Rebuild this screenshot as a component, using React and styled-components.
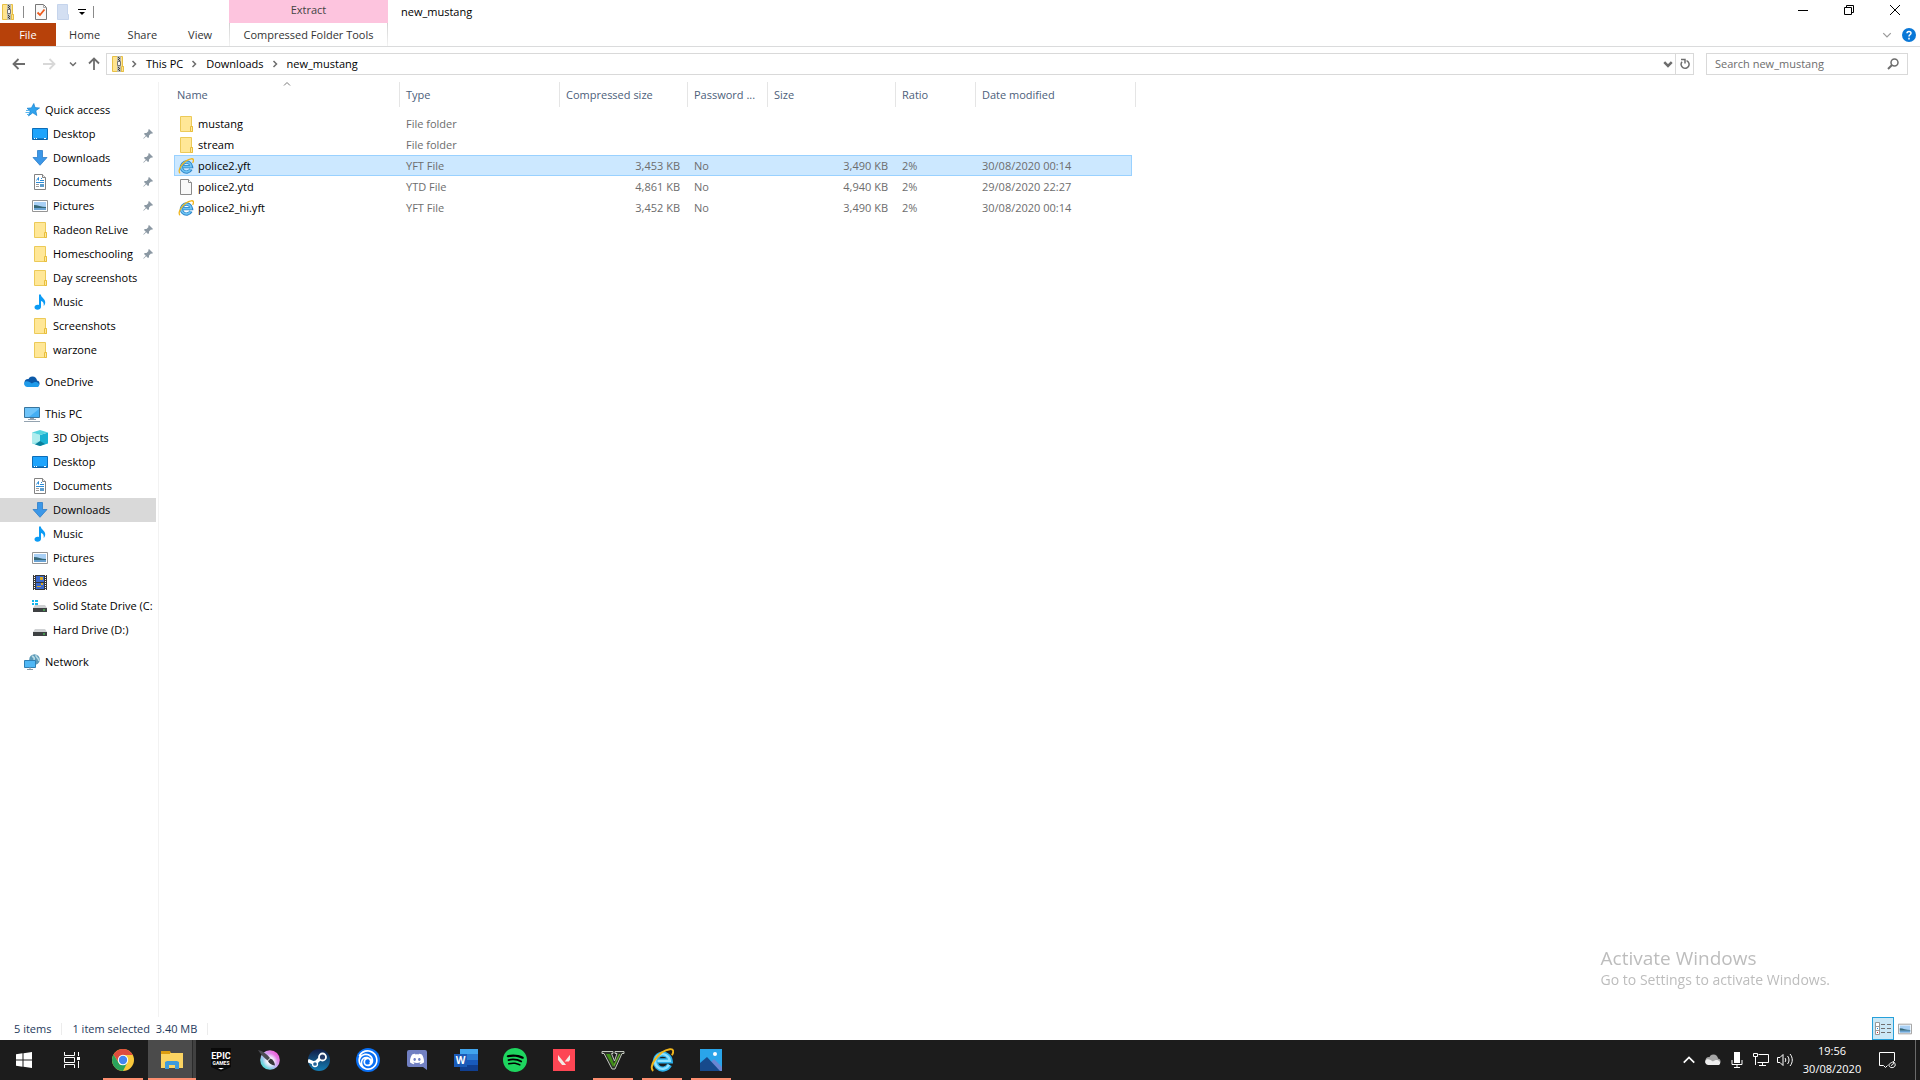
import React, { useState } from 'react';
import styled, { createGlobalStyle, css } from 'styled-components';
import { SiDiscord, SiSpotify, SiUbisoft, SiValorant } from 'react-icons/si';

const GlobalStyle = createGlobalStyle`
    * {
        box-sizing: border-box;
    }

    body {
        margin: 0;
        background-color: #ffffff;
        color: #000000;
        font-family: 'Open Sans', 'Noto Sans', sans-serif;
        font-size: 11px;
        line-height: 16px;
    }

    button, input {
        margin: 0;
        padding: 0;
        border: none;
        background: none;
        color: inherit;
        font: inherit;
    }

    svg {
        display: block;
        flex-shrink: 0;
    }
`

const Window = styled.div`
    display: flex;
    flex-direction: column;
    min-height: 100vh;
`

// Title bar and ribbon
const Ribbon = styled.header`
    display: flex;
    justify-content: space-between;
    height: 47px;
    border-bottom: 1px solid #dadbdc;
`

const RibbonStart = styled.div`
    display: flex;
`

const RibbonMain = styled.div`
    display: flex;
    flex-direction: column;
    width: 229px;
`

const QuickBar = styled.div`
    display: flex;
    align-items: center;
    height: 23px;
    padding-left: 1px;
`

const QuickButton = styled.button`
    display: flex;
    align-items: center;
    justify-content: center;
    width: ${props => props.$narrow ? '16px' : '22px'};
    height: 23px;
`

const QuickDivider = styled.span`
    width: 1px;
    height: 12px;
    margin: 0 6px 0 ${props => props.$start ? '8px' : '3px'};
    background-color: #8a8a8a;
`

const Tabs = styled.div`
    display: flex;
    height: 23px;
`

const Tab = styled.button`
    width: 58px;
    height: 23px;
    color: #333333;
    text-align: center;
`

const FileTab = styled(Tab)`
    width: 56px;
    background-color: #b7410a;
    color: #ffffff;
`

const ContextGroup = styled.div`
    display: flex;
    flex-direction: column;
    width: 159px;
`

const ContextTitle = styled.div`
    height: 23px;
    padding-top: 2px;
    background-color: #fdc4de;
    color: #444444;
    text-align: center;
`

const ContextTab = styled(Tab)`
    width: 100%;
    border: 1px solid;
    border-width: 0 1px;
    border-image: linear-gradient(#d0d0d0, #f4f4f4) 1;
`

const WindowTitle = styled.h1`
    margin: 0;
    padding: 4px 0 0 13px;
    font-size: 11px;
    font-weight: 400;
`

const RibbonEnd = styled.div`
    display: flex;
    flex-direction: column;
    align-items: flex-end;
`

const WindowButtons = styled.div`
    display: flex;
    height: 23px;
    padding-right: 2px;
`

const WindowButton = styled.button`
    display: flex;
    align-items: center;
    justify-content: center;
    width: 46px;
    height: 20px;
`

const RibbonTools = styled.div`
    display: flex;
    align-items: center;
    gap: 10px;
    height: 23px;
    padding-right: 4px;
`

// Address row
const AddressRow = styled.div`
    display: flex;
    align-items: center;
    height: 35px;
    padding: 0 12px 1px 4px;
`

const navWidths = { wide: '30px', medium: '24px', narrow: '18px' };

const NavButton = styled.button`
    display: flex;
    align-items: center;
    justify-content: center;
    width: ${props => navWidths[props.$size || 'wide']};
    height: 22px;
    color: ${props => props.$faded ? '#d8d8d8' : '#6d6d6d'};
`

const AddressBox = styled.div`
    display: flex;
    flex: 1;
    align-items: center;
    height: 22px;
    padding-left: 4px;
    border: 1px solid #d9d9d9;
`

const Crumbs = styled.nav`
    display: flex;
    flex: 1;
    align-items: center;
    padding-left: 5px;
`

const Crumb = styled.a`
    padding: 0 7px 0 8px;
    color: #000000;
    text-decoration: none;
`

const AddressButton = styled.button`
    display: flex;
    align-items: center;
    justify-content: center;
    width: ${props => props.$divided ? '18px' : '14px'};
    height: 20px;
    border-left: ${props => props.$divided ? '1px solid #d9d9d9' : 'none'};
`

const SearchBox = styled.label`
    display: flex;
    align-items: center;
    width: 202px;
    height: 22px;
    margin-left: 12px;
    padding: 0 8px;
    border: 1px solid #d9d9d9;
`

const SearchInput = styled.input`
    flex: 1;
    min-width: 0;
    outline: none;

    &::placeholder {
        color: #6d6d6d;
        opacity: 1;
    }
`

// Navigation pane
const Body = styled.div`
    display: flex;
    flex: 1;
`

const Sidebar = styled.nav`
    width: 159px;
    padding: 16px 2px 0 0;
    border-right: 1px solid #f2f2f2;
`

const TreeGroup = styled.ul`
    margin: 0 0 8px;
    padding: 0;
    list-style: none;
`

const TreeLink = styled.a`
    display: flex;
    align-items: center;
    height: 24px;
    padding-left: ${props => props.$root ? '24px' : '32px'};
    overflow: hidden;
    background-color: ${props => props.$active ? '#d9d9d9' : 'transparent'};
    color: #000000;
    text-decoration: none;
    white-space: nowrap;
`

const TreeLabel = styled.span`
    flex: 1;
    margin-left: 5px;
`

const PinSlot = styled.span`
    padding-right: 3px;
`

// File list
const Content = styled.main`
    flex: 1;
    min-width: 0;
    padding-left: 15px;
`

const FileTable = styled.table`
    width: 962px;
    table-layout: fixed;
    border-collapse: separate;
    border-spacing: 0;
`

const HeaderCell = styled.th`
    position: relative;
    height: 25px;
    padding: 0 6px;
    border-right: 1px solid #e5e5e5;
    color: #4c607a;
    font-weight: 400;
    text-align: left;
    white-space: nowrap;

    &:first-child {
        padding-left: 3px;
    }
`

const SortMark = styled.span`
    position: absolute;
    top: -2px;
    left: 50%;
    transform: translateX(-50%);
`

const Spacer = styled.tr`
    height: 6px;
`

const FileCell = styled.td`
    height: 21px;
    padding: 0 8px 0 6px;
    border: 0 solid transparent;
    border-width: 1px 0;
    color: #6d6d6d;
    text-align: ${props => props.$numeric ? 'right' : 'left'};
    white-space: nowrap;

    &:first-child {
        padding-left: 3px;
        border-left-width: 1px;
        color: #000000;
    }

    &:last-child {
        border-right-width: 1px;
    }

    ${props => props.$selected && css`
        border-color: #99d1ff;
        background-color: #cce8ff;
    `}
`

const FileName = styled.span`
    display: flex;
    align-items: center;
    gap: 4px;
    height: 19px;
`

// Status bar
const StatusBar = styled.footer`
    display: flex;
    align-items: center;
    justify-content: space-between;
    height: 23px;
    padding: 0 4px 0 14px;
    color: #1e395b;
`

const StatusTexts = styled.div`
    display: flex;
    align-items: center;
    gap: 10px;
`

const StatusDivider = styled.span`
    width: 1px;
    height: 12px;
    background-color: #ececec;
`

const ViewButtons = styled.div`
    display: flex;
`

const ViewButton = styled.button`
    display: flex;
    align-items: center;
    justify-content: center;
    width: 22px;
    height: 23px;
    border: 1px solid ${props => props.$active ? '#26a0da' : 'transparent'};
    background-color: ${props => props.$active ? '#cbe8f6' : 'transparent'};
`

const Watermark = styled.div`
    position: fixed;
    right: 90px;
    bottom: 90px;
    color: #bdbdbd;
    pointer-events: none;
`

const WatermarkTitle = styled.div`
    font-size: 19px;
    line-height: 24px;
`

const WatermarkText = styled.div`
    font-size: 14px;
    line-height: 20px;
`

// Taskbar
const Taskbar = styled.div`
    display: flex;
    justify-content: space-between;
    height: 40px;
    background-color: #1c1c1c;
    color: #ffffff;
`

const TaskStart = styled.div`
    display: flex;
`

const TaskApps = styled.div`
    display: flex;
    gap: 1px;
    margin-left: 3px;
`

const TaskButton = styled.button`
    display: flex;
    flex-direction: column;
    align-items: center;
    justify-content: center;
    position: relative;
    width: 48px;
    height: 40px;
    background: ${props => props.$active ? 'linear-gradient(90deg, #4b4b4b 44px, #2b2b2b 44px, #2b2b2b 45px, #414141 45px)' : 'none'};

    ${props => props.$running && css`
        &::after {
            content: '';
            position: absolute;
            right: ${props.$active ? '0' : '4px'};
            bottom: 0;
            left: ${props.$active ? '0' : '4px'};
            height: 2px;
            background-color: #fd8e70;
        }
    `}
`

const Tray = styled.div`
    display: flex;
    align-items: center;
`

const TrayButton = styled.button`
    display: flex;
    align-items: center;
    justify-content: center;
    width: 24px;
    height: 40px;
`

const Clock = styled.button`
    width: 70px;
    height: 40px;
    line-height: 18px;
    text-align: center;
`

const NoticeButton = styled(TrayButton)`
    width: 40px;
`

const ShowDesktop = styled.button`
    width: 5px;
    height: 40px;
    margin-left: 8px;
    border-left: 1px solid #6a6a6a;
`

const ZipIcon = () => (
    <svg width="14" height="16" viewBox="0 0 14 16">
        <path d="M1.500 .5h10v10h1v5h-11z" fill="#ffe48f" stroke="#e6bf45" />
        <path d="M10.500 15.500v-5h2v5z" fill="#ffe48f" stroke="#e6bf45" />
        <path d="M6 0h4v16H6z" fill="#b9b9ad" />
        <path d="M7 1h1v1H7zM8 2h1v1H8zM7 3h1v1H7zM8 4h1v1H8zM7 11h1v1H7zM8 12h1v1H8zM7 13h1v1H7zM8 14h1v1H8z" fill="#3f3f3f" />
        <path d="M6.500 5.500h3v4h-3z" fill="#f3f3f3" stroke="#777777" />
    </svg>
)

const FolderIcon = () => (
    <svg width="16" height="16" viewBox="0 0 16 16">
        <path d="M2.500 .5h11v10h1v5h-12z" fill="#ffe797" stroke="#ecca58" />
        <path d="M12.500 15.500v-5h2v5z" fill="#ffe89e" stroke="#e8be3c" />
    </svg>
)

const FileIcon = () => (
    <svg width="16" height="16" viewBox="0 0 16 16">
        <path d="M2.500 .5h8l3 3v12h-11z" fill="#f9f9f9" stroke="#8a8a8a" />
        <path d="M10.500 .5v3h3" fill="#ffffff" stroke="#8a8a8a" />
    </svg>
)

const ExplorerIcon = ({ size = 16, bright = false }) => (
    <svg width={size} height={size} viewBox="0 0 16 16">
        <path d="M13 11.300A5 5 0 1 1 13.500 8.600H5" fill="none" stroke={bright ? '#2bb0ea' : '#2f86c9'} strokeWidth="3.400" />
        <path d="M12.700 11.200A4.900 4.900 0 1 1 13.200 8.600H5" fill="none" stroke={bright ? '#8fe2ff' : '#6cc3f3'} strokeWidth="1.600" />
        <path d="M2.200 15.200C-1.500 13 5.500 2 13.200 .8C15.800 .4 16 2.600 14.600 4.800" fill="none" stroke="#f0b51c" strokeWidth="1.300" />
    </svg>
)

const StarIcon = () => (
    <svg width="16" height="16" viewBox="0 0 16 16">
        <path d="M9.800 1.500L11 5.600L15.500 6L11.800 8.700L12.800 13.500L8.800 10.800L4.500 13.900L6.200 8.900L3 6.300L7.400 5.900z" fill="#2fa3ee" stroke="#1480cf" strokeWidth=".7" />
        <path d="M2 8.500h3M1.500 10.500h4M3 12.500h2" stroke="#58b6ee" />
    </svg>
)

const DesktopIcon = () => (
    <svg width="16" height="16" viewBox="0 0 16 16">
        <path d="M.5 2.500h15v11H.5z" fill="#1ea4fc" stroke="#0c6db8" />
        <path d="M1 13h14" stroke="#0a5796" />
        <path d="M2 12.500h1M4 12.500h1M12 12.500h2" stroke="#ffffff" />
    </svg>
)

const DownloadIcon = () => (
    <svg width="16" height="16" viewBox="0 0 16 16">
        <path d="M5.500 .5h5v7h4.500L8 15.300L1 7.500h4.500z" fill="#3b97e8" stroke="#2c7cc8" strokeWidth=".8" />
    </svg>
)

const DocumentIcon = () => (
    <svg width="16" height="16" viewBox="0 0 16 16">
        <path d="M2.500 .5h8l3 3v12h-11z" fill="#ffffff" stroke="#828282" />
        <path d="M10.500 .5v3h3" fill="#eeeeee" stroke="#828282" />
        <path d="M4.500 6.500L6.500 3.500V6.500M4 8.500h8M8 6.500h4M9 4.500h1" fill="none" stroke="#2b8bd6" />
        <path d="M4 10.500h3M4 12.500h3" stroke="#9a9a9a" />
        <path d="M8 10h4v3H8z" fill="#5e9dcc" />
    </svg>
)

const PictureIcon = ({ width = 16 }) => (
    <svg width={width} height={width} viewBox="0 0 16 16">
        <path d="M.5 2.500h15v11H.5z" fill="#ffffff" stroke="#959595" />
        <path d="M2 4h12v8H2z" fill="#a9d0f5" />
        <path d="M2 7c4 0 7 2 12 2v1H2z" fill="#356777" />
        <path d="M2 10h12v2H2z" fill="#6ba3d2" />
    </svg>
)

const MusicIcon = () => (
    <svg width="16" height="16" viewBox="0 0 16 16">
        <path d="M7 .5h1.800C9 3.500 13 4.500 13.200 8c.1 1.600-.5 3-1.500 4c.5-3-.8-4.500-2.700-5v6c0 1.600-1.600 2.700-3.500 2.700S2.500 14.700 2.500 13.300s1.300-2.500 3-2.500c.6 0 1.100.1 1.500.3z" fill="#0b9bf5" />
    </svg>
)

const CloudIcon = ({ back = '#0c59a8', front = '#1f9bea' }) => (
    <svg width="16" height="16" viewBox="0 0 16 16">
        <circle cx="8.500" cy="7" r="4.500" fill={back} />
        <circle cx="4" cy="8.500" r="3.500" fill={back} />
        <circle cx="12.500" cy="9.500" r="3" fill={back} />
        <path d="M3 13a3 3 0 0 1-1.500-5.500C4 6.500 6 8.500 8 9.500C10 7.500 13 7.500 14 9A2.200 2.200 0 0 1 13.800 13z" fill={front} />
    </svg>
)

const ComputerIcon = () => (
    <svg width="16" height="16" viewBox="0 0 16 16">
        <path d="M.5 1.500h15v10H.5z" fill="#6fc4f9" stroke="#38759e" />
        <path d="M5 11L15 3v8z" fill="#43aef3" />
        <path d="M6 12.500h4M4 13.500h8M0 15.500h16" stroke="#94a3b0" />
    </svg>
)

const CubeIcon = () => (
    <svg width="16" height="16" viewBox="0 0 16 16">
        <path d="M0 2.500L8 5v11L0 13.500z" fill="#8ee3e6" />
        <path d="M16 2.500L8 5v11l8-2.500z" fill="#1bb1d2" />
        <path d="M0 2.500L8 0l8 2.500L8 5z" fill="#55d3dd" />
        <path d="M8 11l5 3l-5 2l-5-1.500z" fill="#0a7f9b" />
        <path d="M0 2.500L8 5v6l-8 2.500z" fill="#c4f3f3" opacity=".6" />
    </svg>
)

const VideoIcon = () => (
    <svg width="16" height="16" viewBox="0 0 16 16">
        <path d="M1 1h14v15H1z" fill="#383838" />
        <path d="M4 2h8v6H4zM4 9h8v6H4z" fill="#3a68cc" />
        <path d="M2.500 1v15M13.500 1v15" stroke="#ffffff" strokeDasharray="1 1" />
        <path d="M8 3h3v3H8zM5 12h4v1H5zM9 9h2v2H9z" fill="#d7a927" />
    </svg>
)

const DriveIcon = ({ system }) => (
    <svg width="16" height="16" viewBox="0 0 16 16">
        {system && <path d="M0 2h2v2H0zM3 2h3v2H3zM0 5h2v2H0zM3 5h3v2H3z" fill="#13b7ee" />}
        <path d="M3 7h10l2 3H1z" fill="#cfd1d3" />
        <path d="M1 10h14v4H1z" fill="#3e4143" />
        <path d="M11 12h2" stroke="#4dea5b" />
    </svg>
)

const NetworkIcon = () => (
    <svg width="16" height="16" viewBox="0 0 16 16">
        <circle cx="10.500" cy="5.500" r="5.300" fill="#5c9ab8" />
        <path d="M8 2c2 1 3 2 2 4M12 1c-1 2 3 3 3 6" stroke="#b8dbe6" fill="none" strokeWidth="1.500" />
        <path d="M.5 6.500h11v7H.5z" fill="#4fb7f5" stroke="#2e7fb3" />
        <path d="M5 14h2M3 15.500h6" stroke="#8698a5" />
    </svg>
)

const PinIcon = () => (
    <svg width="10" height="10" viewBox="0 0 10 10">
        <path d="M6 0L10 4L9 4.800L8 4.500L6 6.500L6 8.300L5 9L3.200 7.200L.7 9.700L.3 9.300L2.800 6.800L1 5L1.700 4L3.500 4L5.500 2L5.200 1z" fill="#8b98a3" />
    </svg>
)

const Chevron = ({ size = 8, turn = 0, stroke = '#6d6d6d', weight = 1.5 }) => (
    <svg width={size} height={size} viewBox="0 0 8 8">
        <path d="M1 2.500L4 5.500L7 2.500" fill="none" stroke={stroke} strokeWidth={weight} transform={`rotate(${turn} 4 4)`} />
    </svg>
)

const Arrow = ({ turn = 0 }) => (
    <svg width="14" height="14" viewBox="0 0 14 14">
        <path d="M13 7H2M6.500 2L1.500 7L6.500 12" fill="none" stroke="currentColor" strokeWidth="1.800" transform={`rotate(${turn} 7 7)`} />
    </svg>
)

const ChromeIcon = () => (
    <svg width="22" height="22" viewBox="0 0 22 22">
        <circle cx="11" cy="11" r="11" fill="#f9c83b" />
        <path d="M1.500 5.500A11 11 0 0 1 20.500 5.500L20.500 6H11L6.700 13.500z" fill="#de4c3d" />
        <path d="M1.500 5.500A11 11 0 0 0 11 22L15.300 13.500L11 16H8z" fill="#2aa35c" />
        <circle cx="11" cy="11" r="5.200" fill="#ffffff" />
        <circle cx="11" cy="11" r="4.200" fill="#4586f0" />
    </svg>
)

const FilesIcon = () => (
    <svg width="22" height="20" viewBox="0 0 22 20">
        <path d="M0 1h9l1 2h12v5H0z" fill="#dd9d10" />
        <path d="M9 3h13v2H9zM0 4h22v14H0z" fill="#fcd462" />
        <path d="M4 19v-7l2-1h10l2 1v7h-4v-4H8v4z" fill="#3e9bdc" />
    </svg>
)

const EpicIcon = () => (
    <svg width="22" height="26" viewBox="0 0 22 26">
        <path d="M1 1h20v19l-10 4.500L1 20z" fill="#0a0a0a" />
        <text x="11" y="12" textAnchor="middle" fill="#ffffff" fontFamily="Roboto, sans-serif" fontSize="9" fontWeight="700">EPIC</text>
        <text x="11" y="18" textAnchor="middle" fill="#ffffff" fontFamily="Roboto, sans-serif" fontSize="5" fontWeight="700">GAMES</text>
        <path d="M8 21h6l-3 1.500z" fill="#ffffff" />
    </svg>
)

const KritaIcon = () => (
    <svg width="24" height="22" viewBox="0 0 24 22">
        <defs>
            <linearGradient id="krita-rim" x1="1" y1="0" x2="0" y2="1">
                <stop offset=".15" stopColor="#f25fd9" />
                <stop offset=".5" stopColor="#c9b4f7" />
                <stop offset=".85" stopColor="#57dfd8" />
            </linearGradient>
            <radialGradient id="krita-core">
                <stop offset=".3" stopColor="#ffffff" />
                <stop offset="1" stopColor="#ffffff" stopOpacity="0" />
            </radialGradient>
        </defs>
        <circle cx="12" cy="11" r="9.800" fill="url(#krita-rim)" />
        <circle cx="12" cy="12" r="7.500" fill="url(#krita-core)" />
        <path d="M0 1C5 2 9 5 12 9L9.500 11.500C6 9 2.500 5 0 1z" fill="#4a4a50" />
        <path d="M10 12L12.500 9.500C15 10.500 16.500 13 17 16.500C13.500 16 11 14.500 10 12z" fill="#35353a" />
    </svg>
)

const SteamIcon = () => (
    <svg width="22" height="22" viewBox="0 0 22 22">
        <defs>
            <linearGradient id="steam" x1="0" y1="0" x2="0" y2="1">
                <stop offset="0" stopColor="#101c45" />
                <stop offset="1" stopColor="#157eb5" />
            </linearGradient>
        </defs>
        <circle cx="11" cy="11" r="11" fill="url(#steam)" />
        <path d="M0 11.500L7 14.500L12 9.500" fill="none" stroke="#ffffff" strokeWidth="3.500" />
        <circle cx="14.500" cy="8" r="3.500" fill="#263d69" stroke="#ffffff" strokeWidth="1.800" />
        <circle cx="7" cy="15" r="2.500" fill="#25659a" stroke="#ffffff" strokeWidth="1.300" />
    </svg>
)

const UbisoftIcon = () => (
    <svg width="24" height="24" viewBox="0 0 24 24">
        <circle cx="12" cy="12" r="12" fill="#0a70f4" />
        <SiUbisoft x="2" y="2" size={20} color="#ffffff" />
    </svg>
)

const DiscordIcon = () => (
    <svg width="20" height="22" viewBox="0 0 20 22">
        <path d="M2 1h16a2 2 0 0 1 2 2v18l-4-3H2a2 2 0 0 1-2-2V3a2 2 0 0 1 2-2z" fill="#7180c2" />
        <SiDiscord x="3" y="3" size={14} color="#ffffff" />
    </svg>
)

const WordIcon = () => (
    <svg width="24" height="22" viewBox="0 0 24 22">
        <path d="M6 0h18v6H6z" fill="#41a5ee" />
        <path d="M6 5h18v6H6z" fill="#2b7cd3" />
        <path d="M6 11h18v5H6z" fill="#185abd" />
        <path d="M6 16h18v6H6z" fill="#103f91" />
        <path d="M0 5h13v13H0z" fill="#1b5bb8" />
        <text x="6.500" y="15" textAnchor="middle" fill="#ffffff" fontFamily="Open Sans, sans-serif" fontSize="10" fontWeight="700">W</text>
    </svg>
)

const SpotifyIcon = () => (
    <svg width="24" height="24" viewBox="0 0 24 24">
        <circle cx="12" cy="12" r="11" fill="#000000" />
        <SiSpotify size={24} color="#1ed65f" />
    </svg>
)

const ValorantIcon = () => (
    <svg width="22" height="22" viewBox="0 0 22 22">
        <path d="M0 0h22v22H0z" fill="#fd4654" />
        <SiValorant x="5" y="5" size={12} color="#f4ece6" />
    </svg>
)

const GameIcon = () => (
    <svg width="24" height="22" viewBox="0 0 24 22">
        <path d="M1 2.500h11v2h-1.500L13.500 12L16 4.500h-2v-2h9v2h-2L14 20h-3L3 4.500H1z" fill="#2c2f2a" stroke="#c3c8bf" />
        <path d="M5 5h4l4 10l-1 3z" fill="#3f8f17" />
        <path d="M18 5h1.500L13 18l-.5-2z" fill="#5fb02a" />
    </svg>
)

const PhotosIcon = () => (
    <svg width="22" height="22" viewBox="0 0 22 22">
        <path d="M0 0h22v22H0z" fill="#2aa5ea" />
        <path d="M10 14L14 10L22 18v4H10z" fill="#6a86d2" />
        <path d="M0 14L7 8L20 22H0z" fill="#174a8c" />
        <circle cx="15" cy="5" r="2" fill="#ffffff" />
    </svg>
)

const quickAccess = [
    { label: 'Desktop', Icon: DesktopIcon, pinned: true },
    { label: 'Downloads', Icon: DownloadIcon, pinned: true },
    { label: 'Documents', Icon: DocumentIcon, pinned: true },
    { label: 'Pictures', Icon: PictureIcon, pinned: true },
    { label: 'Radeon ReLive', Icon: FolderIcon, pinned: true },
    { label: 'Homeschooling', Icon: FolderIcon, pinned: true },
    { label: 'Day screenshots', Icon: FolderIcon },
    { label: 'Music', Icon: MusicIcon },
    { label: 'Screenshots', Icon: FolderIcon },
    { label: 'warzone', Icon: FolderIcon },
]

const thisPc = [
    { label: '3D Objects', Icon: CubeIcon },
    { label: 'Desktop', Icon: DesktopIcon },
    { label: 'Documents', Icon: DocumentIcon },
    { label: 'Downloads', Icon: DownloadIcon, active: true },
    { label: 'Music', Icon: MusicIcon },
    { label: 'Pictures', Icon: PictureIcon },
    { label: 'Videos', Icon: VideoIcon },
    { label: 'Solid State Drive (C:', Icon: () => <DriveIcon system /> },
    { label: 'Hard Drive (D:)', Icon: DriveIcon },
]

const tree = [
    { label: 'Quick access', Icon: StarIcon, items: quickAccess },
    { label: 'OneDrive', Icon: CloudIcon, items: [] },
    { label: 'This PC', Icon: ComputerIcon, items: thisPc },
    { label: 'Network', Icon: NetworkIcon, items: [] },
]

const files = [
    { name: 'mustang', type: 'File folder', Icon: FolderIcon },
    { name: 'stream', type: 'File folder', Icon: FolderIcon },
    { name: 'police2.yft', type: 'YFT File', packed: '3,453 KB', locked: 'No', size: '3,490 KB', ratio: '2%', date: '30/08/2020 00:14', Icon: ExplorerIcon },
    { name: 'police2.ytd', type: 'YTD File', packed: '4,861 KB', locked: 'No', size: '4,940 KB', ratio: '2%', date: '29/08/2020 22:27', Icon: FileIcon },
    { name: 'police2_hi.yft', type: 'YFT File', packed: '3,452 KB', locked: 'No', size: '3,490 KB', ratio: '2%', date: '30/08/2020 00:14', Icon: ExplorerIcon },
]

const columns = [226, 160, 128, 80, 128, 80, 156, 4]

const apps = [
    { name: 'Google Chrome', Icon: ChromeIcon, running: true },
    { name: 'File Explorer', Icon: FilesIcon, running: true, active: true },
    { name: 'Epic Games Launcher', Icon: EpicIcon },
    { name: 'Krita', Icon: KritaIcon },
    { name: 'Steam', Icon: SteamIcon },
    { name: 'Ubisoft Connect', Icon: UbisoftIcon },
    { name: 'Discord', Icon: DiscordIcon },
    { name: 'Word', Icon: WordIcon },
    { name: 'Spotify', Icon: SpotifyIcon },
    { name: 'Valorant', Icon: ValorantIcon },
    { name: 'Grand Theft Auto V', Icon: GameIcon, running: true },
    { name: 'Internet Explorer', Icon: () => <ExplorerIcon size={24} bright />, running: true },
    { name: 'Photos', Icon: PhotosIcon, running: true },
]

const TreeItem = ({ item, root }) => (
    <li>
        <TreeLink href="#" $root={root} $active={item.active}>
            <item.Icon />
            <TreeLabel>{item.label}</TreeLabel>
            {item.pinned && <PinSlot><PinIcon /></PinSlot>}
        </TreeLink>
    </li>
)

const RibbonBar = () => (
    <Ribbon>
        <RibbonStart>
            <RibbonMain>
                <QuickBar>
                    <ZipIcon />
                    <QuickDivider $start />
                    <QuickButton aria-label="Properties">
                        <svg width="12" height="16" viewBox="0 0 12 16">
                            <path d="M.5 .5h8l3 3v12H.5z" fill="#f8f8f8" stroke="#777777" />
                            <path d="M8.500 .5v3h3" fill="none" stroke="#aaaaaa" />
                            <path d="M2.500 8.500L5 11L9.500 5.500" fill="none" stroke="#ee5a1c" strokeWidth="1.800" />
                        </svg>
                    </QuickButton>
                    <QuickButton aria-label="New folder">
                        <svg width="14" height="16" viewBox="0 0 14 16">
                            <path d="M1.500 .5h10v10h1v5h-11z" fill="#d3dff2" stroke="#c5d4ec" />
                        </svg>
                    </QuickButton>
                    <QuickButton $narrow aria-label="Customise Quick Access Toolbar">
                        <svg width="8" height="8" viewBox="0 0 8 8">
                            <path d="M0 1.500h8" stroke="#000000" />
                            <path d="M1 4h6L4 7z" fill="#000000" />
                        </svg>
                    </QuickButton>
                    <QuickDivider />
                </QuickBar>
                <Tabs>
                    <FileTab>File</FileTab>
                    <Tab>Home</Tab>
                    <Tab>Share</Tab>
                    <Tab>View</Tab>
                </Tabs>
            </RibbonMain>
            <ContextGroup>
                <ContextTitle>Extract</ContextTitle>
                <ContextTab>Compressed Folder Tools</ContextTab>
            </ContextGroup>
            <WindowTitle>new_mustang</WindowTitle>
        </RibbonStart>
        <RibbonEnd>
            <WindowButtons>
                <WindowButton aria-label="Minimise">
                    <svg width="10" height="10" viewBox="0 0 10 10"><path d="M0 5.500h10" stroke="#000000" /></svg>
                </WindowButton>
                <WindowButton aria-label="Restore">
                    <svg width="10" height="10" viewBox="0 0 10 10">
                        <path d="M.5 2.500h7v7h-7zM2.500 2.500v-2h7v7h-2" fill="none" stroke="#000000" />
                    </svg>
                </WindowButton>
                <WindowButton aria-label="Close">
                    <svg width="10" height="10" viewBox="0 0 10 10"><path d="M0 0L10 10M10 0L0 10" stroke="#000000" /></svg>
                </WindowButton>
            </WindowButtons>
            <RibbonTools>
                <button aria-label="Expand the Ribbon"><Chevron size={10} stroke="#9a9a9a" weight={1} /></button>
                <button aria-label="Help">
                    <svg width="14" height="14" viewBox="0 0 14 14">
                        <circle cx="7" cy="7" r="7" fill="#0a78d7" />
                        <path d="M5 5.300C5 2.800 9 2.800 9 5.200C9 6.800 7 6.800 7 8.500M7 9.800v1.600" fill="none" stroke="#ffffff" strokeWidth="1.500" />
                    </svg>
                </button>
            </RibbonTools>
        </RibbonEnd>
    </Ribbon>
)

const AddressBar = () => (
    <AddressRow>
        <NavButton aria-label="Back"><Arrow /></NavButton>
        <NavButton $faded aria-label="Forward"><Arrow turn={180} /></NavButton>
        <NavButton $size="narrow" aria-label="Recent locations"><Chevron /></NavButton>
        <NavButton $size="medium" aria-label="Up"><Arrow turn={90} /></NavButton>
        <AddressBox>
            <ZipIcon />
            <Crumbs aria-label="Address">
                <Chevron turn={-90} />
                <Crumb href="#">This PC</Crumb>
                <Chevron turn={-90} />
                <Crumb href="#">Downloads</Crumb>
                <Chevron turn={-90} />
                <Crumb href="#">new_mustang</Crumb>
            </Crumbs>
            <AddressButton aria-label="Previous locations"><Chevron size={10} weight={2} /></AddressButton>
            <AddressButton $divided aria-label="Refresh">
                <svg width="10" height="12" viewBox="0 0 10 12">
                    <path d="M6.500 2.600A4 4 0 1 1 2 3.800M1 1.500h4v4" fill="none" stroke="#6d6d6d" strokeWidth="1.500" />
                </svg>
            </AddressButton>
        </AddressBox>
        <SearchBox>
            <SearchInput type="search" aria-label="Search" placeholder="Search new_mustang" />
            <svg width="12" height="12" viewBox="0 0 12 12">
                <circle cx="7.500" cy="4.500" r="3.500" fill="none" stroke="#6d6d6d" strokeWidth="1.500" />
                <path d="M5 7L1 11" stroke="#6d6d6d" strokeWidth="2" />
            </svg>
        </SearchBox>
    </AddressRow>
)

const FileList = ({ selected, onSelect }) => (
    <FileTable>
        <colgroup>
            {columns.map((width, i) => <col key={i} style={{ width }} />)}
        </colgroup>
        <thead>
            <tr>
                <HeaderCell>Name<SortMark><Chevron turn={180} stroke="#7a7a7a" weight={1} /></SortMark></HeaderCell>
                <HeaderCell>Type</HeaderCell>
                <HeaderCell>Compressed size</HeaderCell>
                <HeaderCell>Password ...</HeaderCell>
                <HeaderCell>Size</HeaderCell>
                <HeaderCell>Ratio</HeaderCell>
                <HeaderCell colSpan={2}>Date modified</HeaderCell>
            </tr>
        </thead>
        <tbody>
            <Spacer aria-hidden="true" />
            {files.map(file => {
                const on = file.name === selected;
                return (
                    <tr key={file.name} onClick={() => onSelect(file.name)} aria-selected={on}>
                        <FileCell $selected={on}><FileName><file.Icon />{file.name}</FileName></FileCell>
                        <FileCell $selected={on}>{file.type}</FileCell>
                        <FileCell $selected={on} $numeric>{file.packed}</FileCell>
                        <FileCell $selected={on}>{file.locked}</FileCell>
                        <FileCell $selected={on} $numeric>{file.size}</FileCell>
                        <FileCell $selected={on}>{file.ratio}</FileCell>
                        <FileCell $selected={on}>{file.date}</FileCell>
                    </tr>
                )
            })}
        </tbody>
    </FileTable>
)

const TaskBar = () => (
    <Taskbar>
        <TaskStart>
            <TaskButton aria-label="Start">
                <svg width="16" height="16" viewBox="0 0 16 16">
                    <path d="M0 2.200L6.500 1.300V7.500H0zM7.500 1.200L16 0v7.500H7.500zM0 8.500h6.500v6.200L0 13.800zM7.500 8.500H16V16l-8.500-1.200z" fill="#ffffff" />
                </svg>
            </TaskButton>
            <TaskButton aria-label="Task View">
                <svg width="16" height="16" viewBox="0 0 16 16">
                    <path d="M.5 0v3.500h10V0M.5 16v-3.500h10V16M.5 5.500h10v5H.5zM14.500 0v4M14.500 9v7" fill="none" stroke="#ffffff" />
                    <path d="M13 5h3v3h-3z" fill="#ffffff" />
                </svg>
            </TaskButton>
            <TaskApps>
                {apps.map(({ name, Icon, running, active }) => (
                    <TaskButton key={name} aria-label={name} $running={running} $active={active}>
                        <Icon />
                    </TaskButton>
                ))}
            </TaskApps>
        </TaskStart>
        <Tray>
            <TrayButton aria-label="Show hidden icons"><Chevron size={14} turn={180} stroke="#ffffff" weight={1} /></TrayButton>
            <TrayButton aria-label="OneDrive"><CloudIcon back="#a5a5a5" front="#eeeeee" /></TrayButton>
            <TrayButton aria-label="Microphone">
                <svg width="12" height="16" viewBox="0 0 12 16">
                    <path d="M3 0h6v11H3z" fill="#ffffff" />
                    <path d="M1 8v4.500h10V8M6 12v3.500M3 15.500h6" fill="none" stroke="#ffffff" />
                </svg>
            </TrayButton>
            <TrayButton aria-label="Network">
                <svg width="16" height="16" viewBox="0 0 16 16">
                    <path d="M5.500 2.500h10v8h-11M.5 1.500h4v3h-4zM2.500 5v8M9.500 11v3M6 13.500h7" fill="none" stroke="#ffffff" />
                </svg>
            </TrayButton>
            <TrayButton aria-label="Volume">
                <svg width="16" height="16" viewBox="0 0 16 16">
                    <path d="M.5 5.500h2.500l3-3v11l-3-3H.5zM8 6c1 1 1 3 0 4M10.500 4c2 2.500 2 5.500 0 8M13 2c3 3.500 3 8.500 0 12" fill="none" stroke="#ffffff" />
                </svg>
            </TrayButton>
            <Clock>19:56<br />30/08/2020</Clock>
            <NoticeButton aria-label="Notifications">
                <svg width="18" height="18" viewBox="0 0 18 18">
                    <path d="M9.500 14.500L7.500 16.500L5.500 14.500H1.500V1.500h15V10" fill="none" stroke="#ffffff" />
                    <path d="M15.500 10.500c-3.500 2-5 2.500-4.500 4c1 3 5 2.500 6 .5c.5-1.500 0-3-1.500-4.500c.3 2-.5 3.500-2.500 4" fill="#1c1c1c" stroke="#ffffff" />
                </svg>
            </NoticeButton>
            <ShowDesktop aria-label="Show desktop" />
        </Tray>
    </Taskbar>
)

const App = () => {
    const [selected, setSelected] = useState('police2.yft');

    return (
        <>
            <GlobalStyle />
            <Window>
                <RibbonBar />
                <AddressBar />
                <Body>
                    <Sidebar aria-label="Folders">
                        {tree.map(group => (
                            <TreeGroup key={group.label}>
                                <TreeItem item={group} root />
                                {group.items.map(item => <TreeItem key={item.label} item={item} />)}
                            </TreeGroup>
                        ))}
                    </Sidebar>
                    <Content>
                        <FileList selected={selected} onSelect={setSelected} />
                    </Content>
                </Body>
                <StatusBar>
                    <StatusTexts>
                        <span>{files.length} items</span>
                        <StatusDivider />
                        <span>1 item selected&nbsp; 3.40 MB</span>
                        <StatusDivider />
                    </StatusTexts>
                    <ViewButtons>
                        <ViewButton $active aria-label="Details view">
                            <svg width="16" height="14" viewBox="0 0 16 14">
                                <path d="M.5 .5h4v12h-4zM.5 4.500h4M.5 8.500h4" fill="#ffffff" stroke="#999999" />
                                <path d="M6 2.500h4M6 6.500h4M6 10.500h4M12 2.500h4M12 6.500h4M12 10.500h4" stroke="#707070" />
                                <path d="M2 6h1v1H2z" fill="#1c8ce0" />
                                <path d="M2 10h1v1H2z" fill="#d22222" />
                            </svg>
                        </ViewButton>
                        <ViewButton aria-label="Large icons view"><PictureIcon width={14} /></ViewButton>
                    </ViewButtons>
                </StatusBar>
                <TaskBar />
            </Window>
            <Watermark>
                <WatermarkTitle>Activate Windows</WatermarkTitle>
                <WatermarkText>Go to Settings to activate Windows.</WatermarkText>
            </Watermark>
        </>
    );
};

export default App;
